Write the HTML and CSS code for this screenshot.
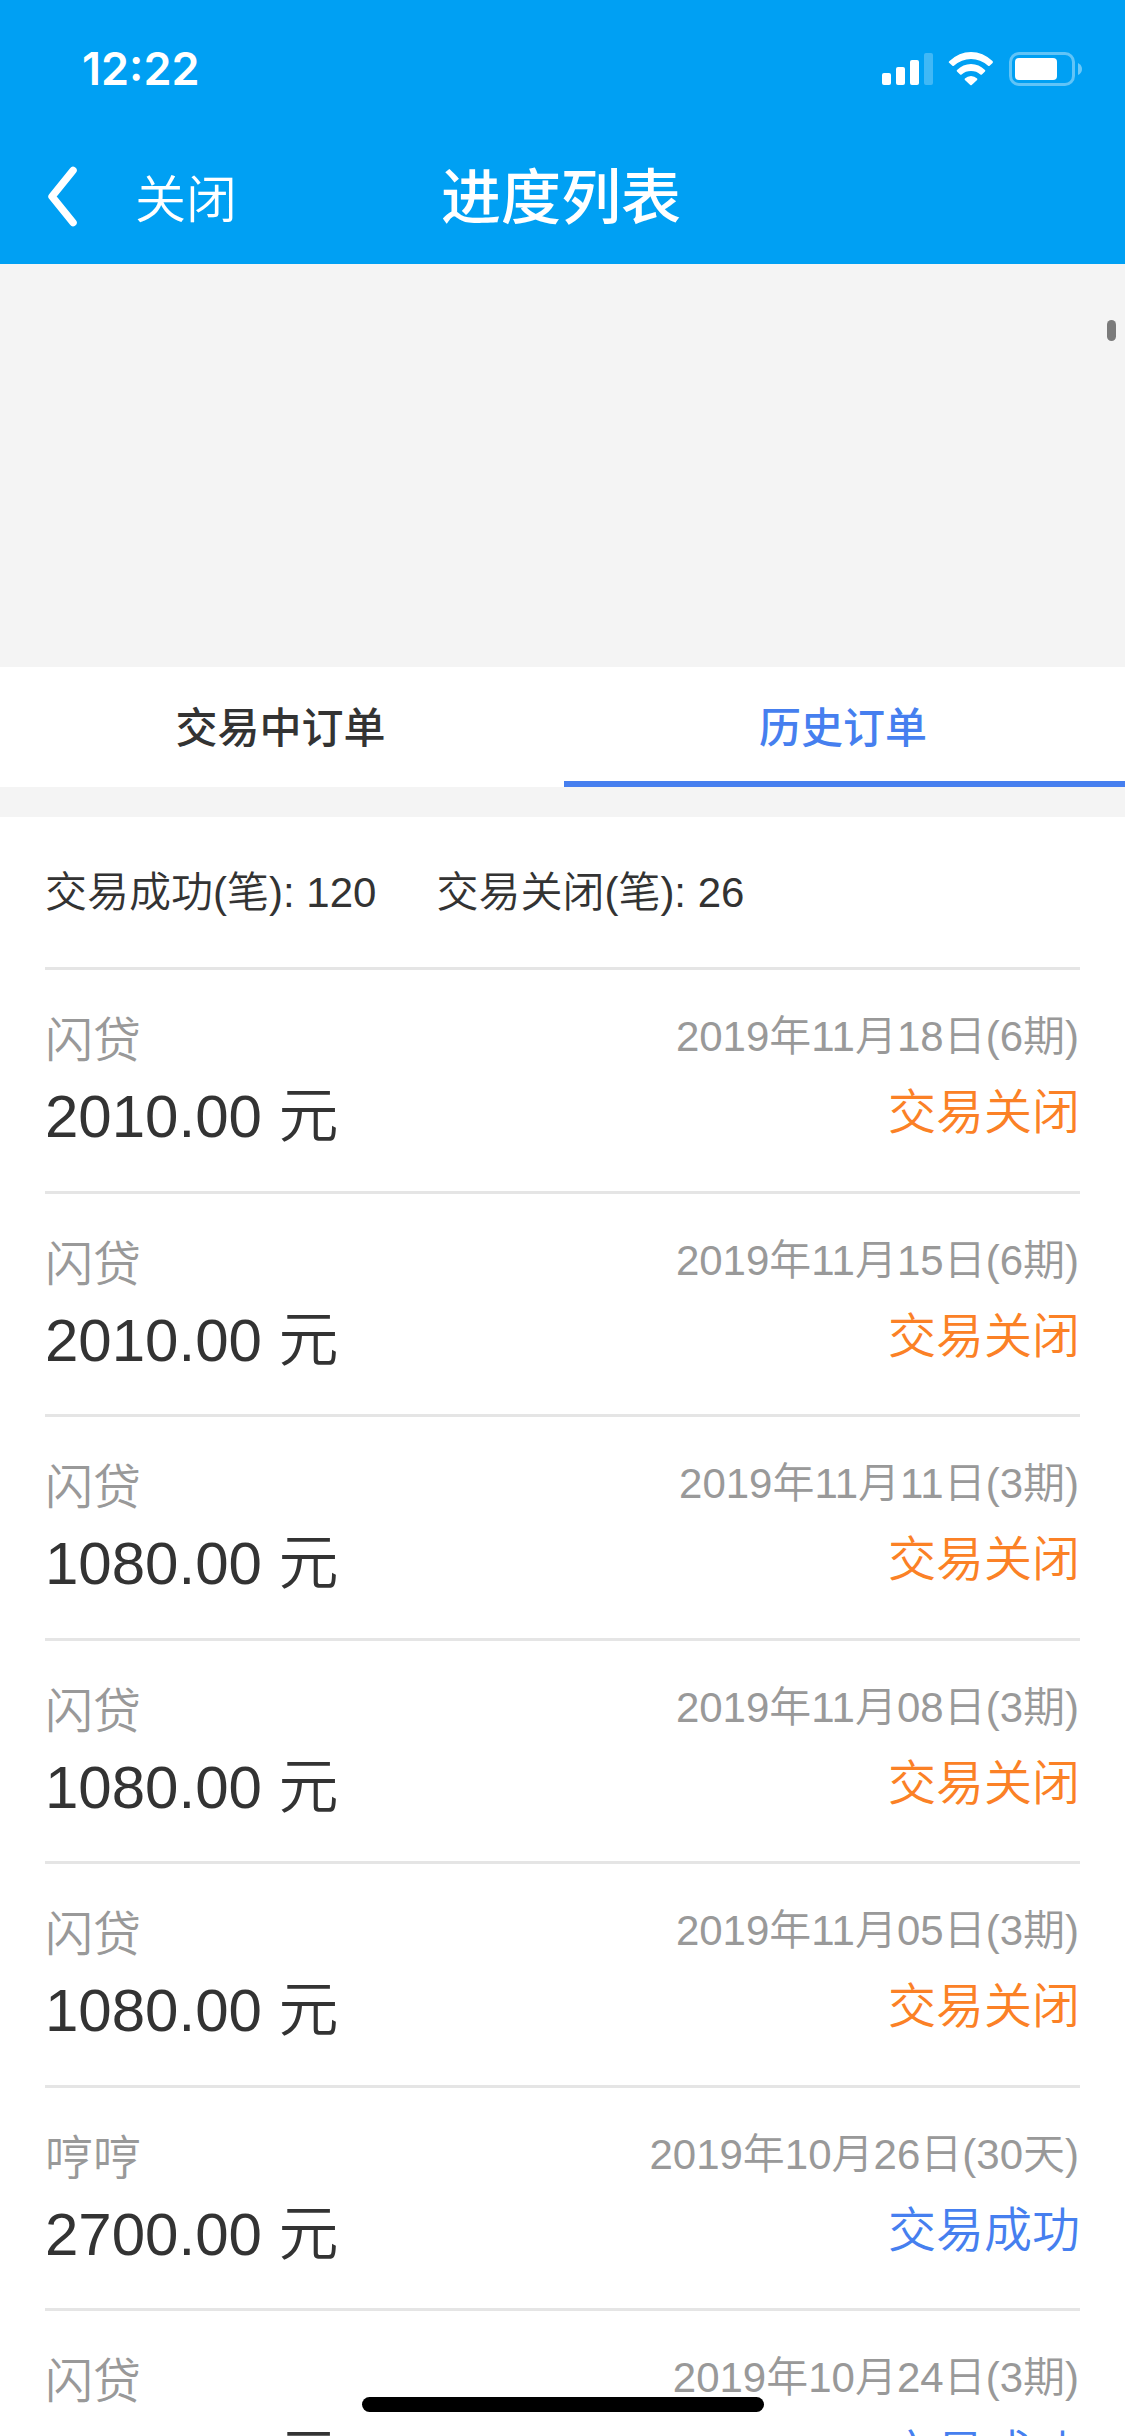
FILE: index.html
```html
<!DOCTYPE html>
<html lang="zh-CN">
<head>
<meta charset="utf-8">
<title>进度列表</title>
<link rel="stylesheet" href="styles.css">
</head>
<body>
<div class="screen">
  <header class="header">
    <div class="status-bar">
      <span class="clock">12:22</span>
      <svg class="status-icons" width="202" height="36" viewBox="0 0 202 36" fill="#fff">
        <rect x="0" y="22" width="9" height="12" rx="2"/>
        <rect x="14" y="16" width="9" height="18" rx="2"/>
        <rect x="28" y="9" width="9" height="25" rx="2"/>
        <rect x="42" y="2" width="9" height="32" rx="2" opacity=".25"/>
        <path d="M66.6 11.2Q67 10.6 67.5 10.1Q77 1 89 1Q101 1 110.500 10.100Q111.400 11 110.600 11.900L107.600 14.800Q106.900 15.400 106.100 14.800Q98.500 8 89 8Q79.500 8 71.900 14.800Q71.100 15.400 70.400 14.800L67.400 11.900Q67 11.500 66.600 11.200Z"/>
        <path d="M75 19Q81 13 89 13Q97 13 103 19Q103.700 19.700 103 20.400L99.900 23.400Q99.200 24 98.400 23.400Q94.500 20 89 20Q83.500 20 79.600 23.400Q78.800 24 78.100 23.400L75 20.400Q74.300 19.700 75 19Z"/>
        <path d="M82.900 27.600Q85.500 25 89 25Q92.500 25 95.100 27.600Q95.700 28.300 95.100 28.900L89.700 33.900Q89 34.500 88.300 33.900L82.900 28.900Q82.300 28.300 82.900 27.600Z"/>
        <rect x="128.500" y="2.500" width="63" height="31" rx="8.500" fill="none" stroke="#fff" stroke-width="3" opacity=".38"/>
        <rect x="133" y="7" width="42" height="22" rx="4"/>
        <path d="M196 12Q200 14 200 18Q200 22 196 24Z" opacity=".42"/>
      </svg>
    </div>
    <nav class="nav-bar">
      <div class="nav-left">
        <svg class="back" width="30" height="62" viewBox="0 0 30 62" fill="none" stroke="#fff" stroke-width="7.500" stroke-linecap="round" stroke-linejoin="round"><path d="M25 4.500L4 30.500L25 56.500"/></svg>
        <span class="close">关闭</span>
      </div>
      <h1 class="title">进度列表</h1>
      <div></div>
    </nav>
  </header>

  <div class="spacer"></div>

  <div class="tabs">
    <div class="tab">交易中订单</div>
    <div class="tab active">历史订单</div>
  </div>

  <main class="orders">
    <div class="summary"><span>交易成功(笔): 120</span><span>交易关闭(笔): 26</span></div>
    <div class="order">
      <div class="info"><div class="name">闪贷</div><div class="amount">2010.00 元</div></div>
      <div class="state"><div class="date">2019年11月18日(6期)</div><div class="result closed">交易关闭</div></div>
    </div>
    <div class="order">
      <div class="info"><div class="name">闪贷</div><div class="amount">2010.00 元</div></div>
      <div class="state"><div class="date">2019年11月15日(6期)</div><div class="result closed">交易关闭</div></div>
    </div>
    <div class="order">
      <div class="info"><div class="name">闪贷</div><div class="amount">1080.00 元</div></div>
      <div class="state"><div class="date">2019年11月11日(3期)</div><div class="result closed">交易关闭</div></div>
    </div>
    <div class="order">
      <div class="info"><div class="name">闪贷</div><div class="amount">1080.00 元</div></div>
      <div class="state"><div class="date">2019年11月08日(3期)</div><div class="result closed">交易关闭</div></div>
    </div>
    <div class="order">
      <div class="info"><div class="name">闪贷</div><div class="amount">1080.00 元</div></div>
      <div class="state"><div class="date">2019年11月05日(3期)</div><div class="result closed">交易关闭</div></div>
    </div>
    <div class="order">
      <div class="info"><div class="name">哼哼</div><div class="amount">2700.00 元</div></div>
      <div class="state"><div class="date">2019年10月26日(30天)</div><div class="result success">交易成功</div></div>
    </div>
    <div class="order">
      <div class="info"><div class="name">闪贷</div><div class="amount">1080.00 元</div></div>
      <div class="state"><div class="date">2019年10月24日(3期)</div><div class="result success">交易成功</div></div>
    </div>
  </main>

  <div class="scroll-thumb"></div>
  <div class="home-indicator"></div>
</div>
</body>
</html>
```
FILE: styles.css
```css
* { box-sizing: border-box; }

body {
  margin: 0;
  font-family: "Liberation Sans", "Noto Sans CJK SC", sans-serif;
  font-weight: 350;
  color: #333;
  background: #f4f4f4;
}

.screen {
  position: relative;
  width: 1125px;
  height: 2436px;
  overflow: hidden;
  display: flex;
  flex-direction: column;
}

.header {
  flex: none;
  height: 264px;
  background: #00a0f3;
  color: #fff;
}

.status-bar {
  display: flex;
  justify-content: space-between;
  align-items: center;
  height: 132px;
  padding: 6px 41px 0 82px;
}

.clock {
  font-family: Inter, sans-serif;
  font-weight: 600;
  font-size: 45px;
  line-height: 54px;
}

.nav-bar {
  display: grid;
  grid-template-columns: 1fr auto 1fr;
  align-items: center;
  height: 132px;
  padding: 0 48px 2px 48px;
}

.nav-left {
  display: flex;
  align-items: center;
  gap: 57px;
}

.close {
  padding-bottom: 3px;
  font-size: 51px;
}

.title {
  margin: 0;
  padding: 3px 3px 0 0;
  font-size: 60px;
  font-weight: 500;
  line-height: 84px;
}

.spacer { flex: none; height: 403px; }

.tabs {
  flex: none;
  display: grid;
  grid-template-columns: 564px 1fr;
  height: 120px;
  background: #fff;
}

.tab {
  padding: 4px 3px 0 0;
  font-size: 42px;
  font-weight: 500;
  line-height: 116px;
  text-align: center;
}

.tab.active {
  color: #467fef;
  box-shadow: inset 0 -6px #467fef;
}

.orders {
  flex: none;
  margin-top: 30px;
  padding: 0 45px;
  background: #fff;
}

.summary {
  display: flex;
  gap: 60px;
  height: 150px;
  padding-top: 1px;
  font-size: 42px;
  line-height: 150px;
}

.order {
  display: flex;
  justify-content: space-between;
  height: 223.500px;
  padding-top: 37px;
  border-top: 3px solid #e5e5e5;
}

.name {
  color: #999;
  font-size: 48px;
  line-height: 67px;
}

.amount {
  margin-top: 1px;
  font-size: 60px;
  line-height: 84px;
}

.state { text-align: right; }

.date {
  padding-right: 1px;
  color: #999;
  font-size: 42px;
  line-height: 60px;
}

.result {
  margin-top: 12px;
  font-size: 48px;
  line-height: 67px;
}

.closed { color: #fb8126; }
.success { color: #467fef; }

.scroll-thumb {
  position: absolute;
  top: 320px;
  right: 9px;
  width: 9px;
  height: 21px;
  border-radius: 5px;
  background: #7b7b7b;
}

.home-indicator {
  position: absolute;
  left: 362px;
  bottom: 24px;
  width: 402px;
  height: 15px;
  border-radius: 8px;
  background: #000;
}
```
